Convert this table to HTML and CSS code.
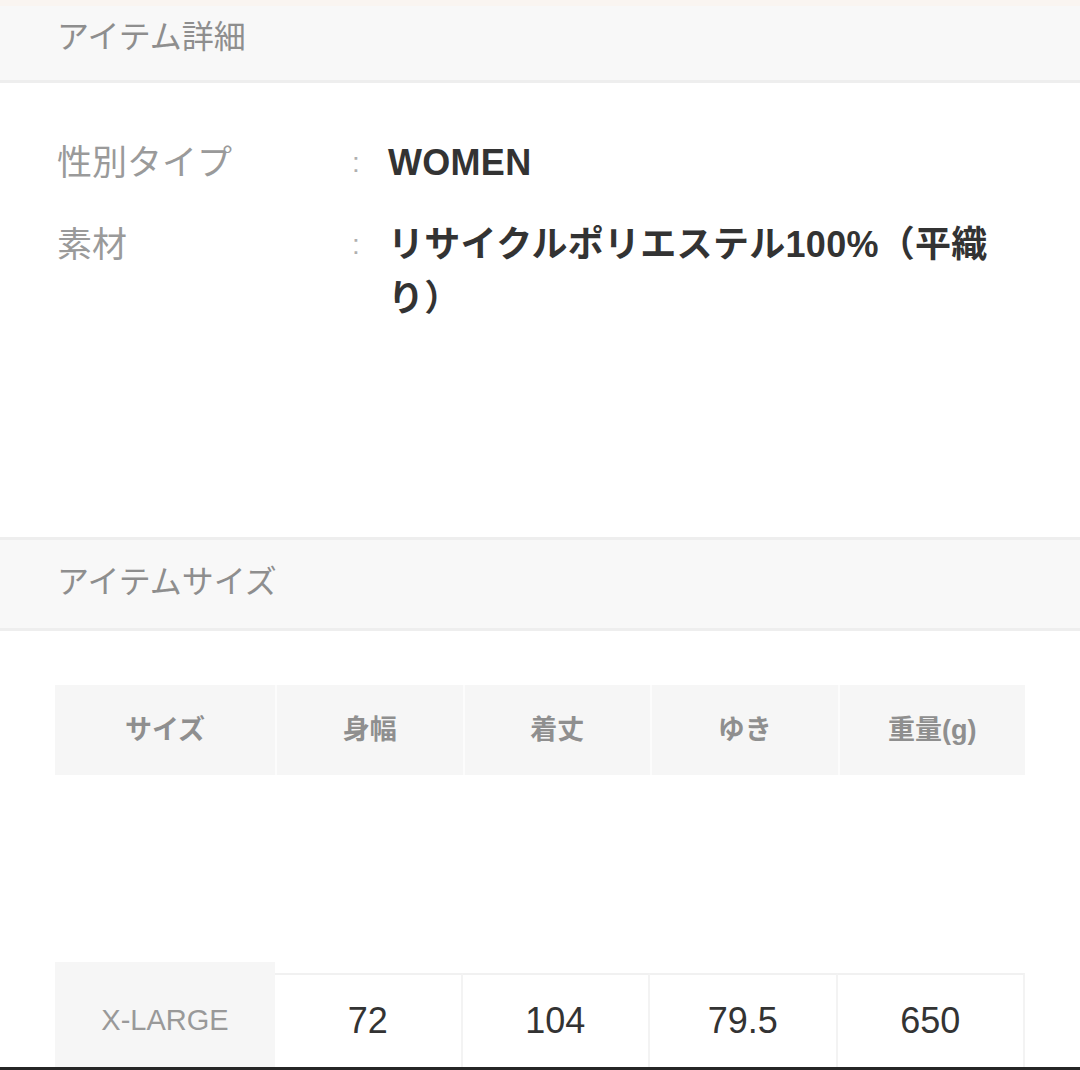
FILE: index.html
```html
<!DOCTYPE html>
<html>
<head>
    <meta charset="utf-8">
    <title>アイテム詳細</title>
    <link rel="stylesheet" href="styles.css">
</head>
<body>
    <div class="titulo titulo-topo">アイテム詳細</div>

    <div class="detalhes">
        <div class="linha">
            <div class="rotulo">性別タイプ</div>
            <div class="sep">:</div>
            <div class="valor">WOMEN</div>
        </div>
        <div class="linha">
            <div class="rotulo">素材</div>
            <div class="sep">:</div>
            <div class="valor">リサイクルポリエステル100%（平織り）</div>
        </div>
    </div>

    <div class="titulo titulo-meio">アイテムサイズ</div>

    <div class="tabela cab">
        <div class="th">サイズ</div>
        <div class="th">身幅</div>
        <div class="th">着丈</div>
        <div class="th">ゆき</div>
        <div class="th">重量(g)</div>
    </div>

    <div class="tabela dados">
        <div class="td-nome">X-LARGE</div>
        <div class="td">72</div>
        <div class="td">104</div>
        <div class="td">79.5</div>
        <div class="td">650</div>
    </div>

    <div class="rodape"></div>
</body>
</html>
```

FILE: styles.css
```css
html, body { margin: 0; padding: 0; background: #fff; }
body { font-family: "Liberation Sans", "Noto Sans CJK JP", sans-serif; height: 1070px; overflow: hidden; display: flex; flex-direction: column; }

.titulo { background: #f8f8f8; color: #8e8e8e; font-size: 32px; line-height: 52px; padding-left: 57px; border-bottom: 3px solid #eeeeee; flex: none; }
.titulo-topo { border-top: 6px solid #faf5f1; padding-top: 5px; padding-bottom: 17px; }
.titulo-meio { border-top: 3px solid #eeeeee; padding-top: 16px; padding-bottom: 20px; }

.detalhes { padding: 53px 0 0 57px; height: 454px; box-sizing: border-box; flex: none; }
.linha { display: grid; grid-template-columns: 290px 41px 615px; line-height: 54px; margin-bottom: 28px; }
.rotulo { color: #9a9a9a; font-size: 35px; }
.sep { color: #b0b0b0; font-size: 28px; padding-left: 5px; }
.valor { color: #333; font-size: 36px; font-weight: bold; letter-spacing: 0.3px; }

.tabela { display: grid; grid-template-columns: 220px repeat(4, 1fr); width: 970px; margin-left: 55px; }
.cab { margin-top: 54px; gap: 2px; background: #fcfcfc; flex: none; }
.th { background: #f6f6f6; color: #8f8f8f; font-size: 27px; font-weight: bold; text-align: center; line-height: 90px; }

.dados { margin-top: 187px; flex: 1; }
.td-nome { background: #f6f6f6; color: #999; font-size: 29px; display: flex; align-items: center; justify-content: center; padding-top: 11px; }
.td { margin-top: 11px; border-top: 2px solid #f1f1f1; border-right: 2px solid #f3f3f3; color: #333; font-size: 36px; display: flex; align-items: center; justify-content: center; }

.rodape { height: 3px; background: #262626; flex: none; }
```
